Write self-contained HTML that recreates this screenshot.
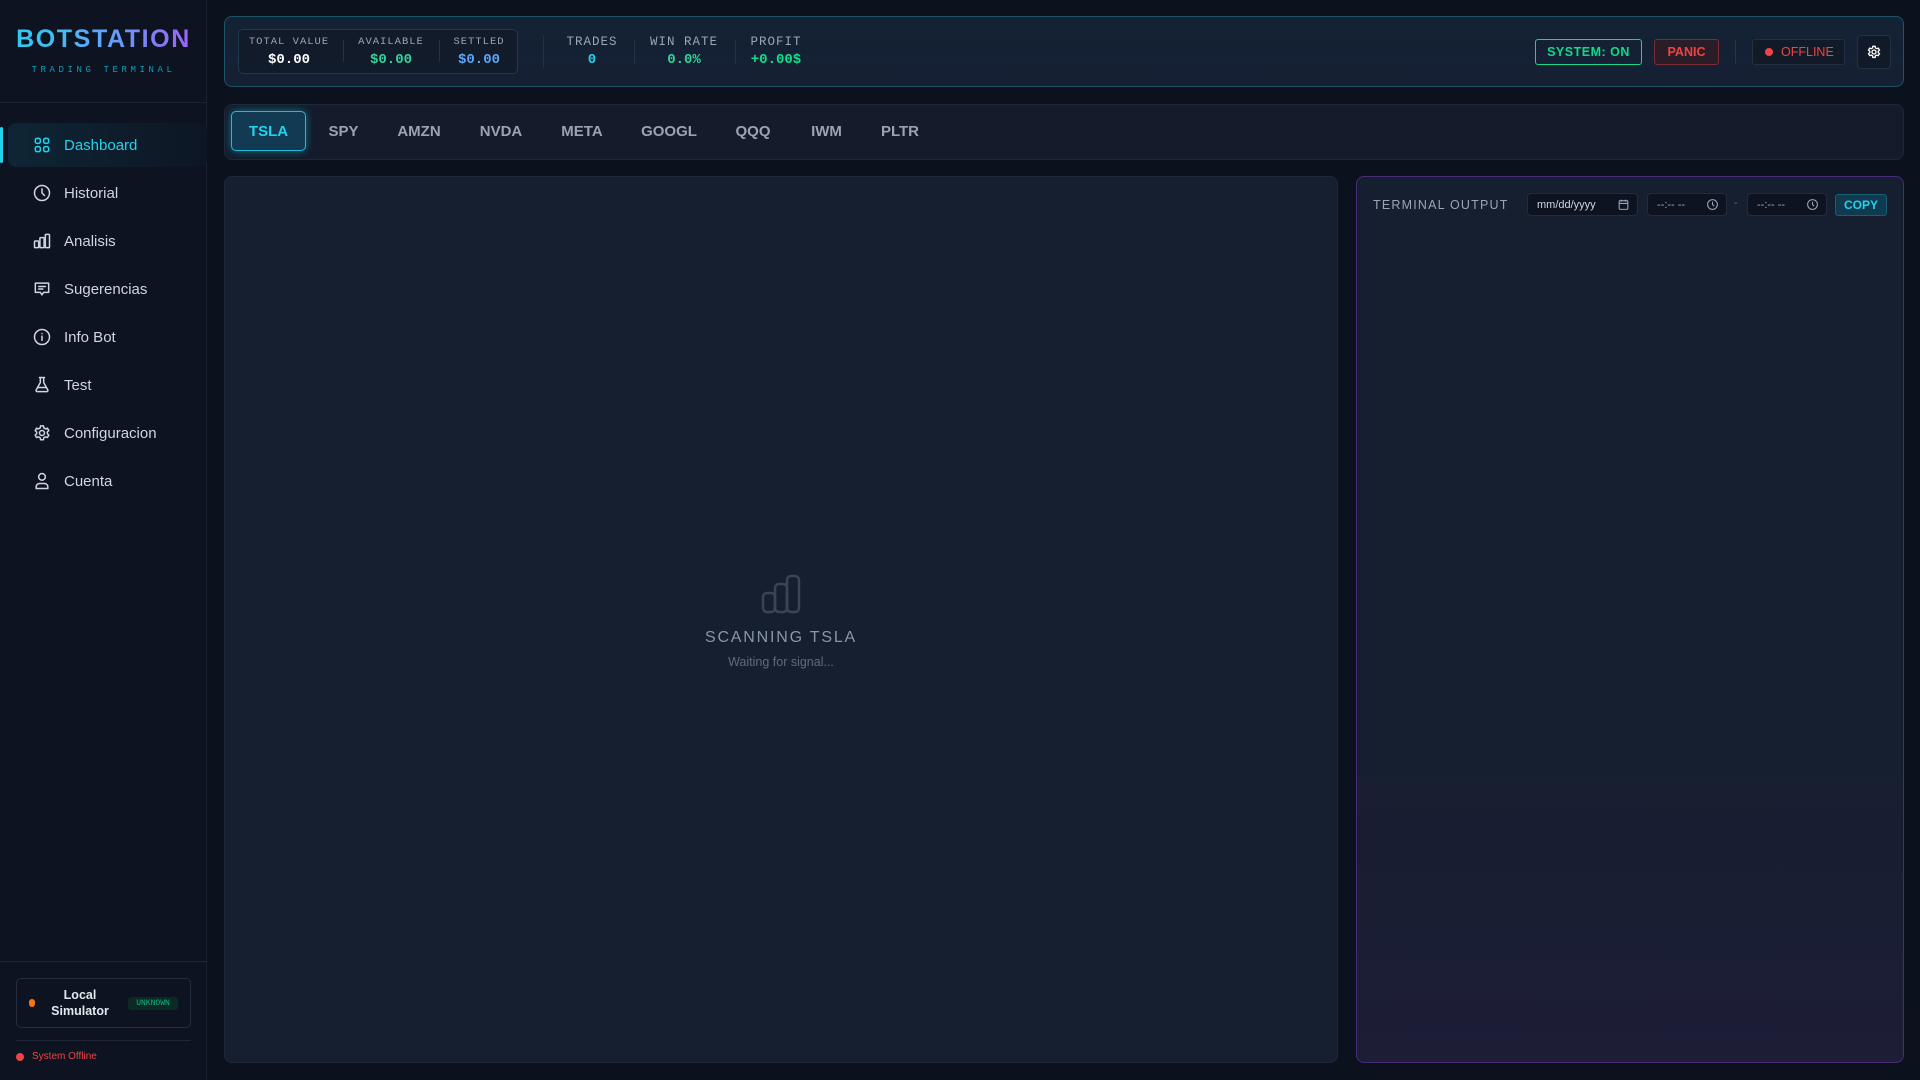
<!DOCTYPE html>
<html><head><meta charset="utf-8"><style>
*{box-sizing:border-box;margin:0;padding:0}
body{width:1920px;height:1080px;background:#0b111d;font-family:"Liberation Sans",sans-serif;position:relative;overflow:hidden;color:#cbd5e1}
.abs{position:absolute}
.side{left:0;top:0;width:207px;height:1080px;background:#0d1320;border-right:1px solid #1a2232}
.logo{left:0;top:25px;width:207px;text-align:center;font-size:25px;font-weight:bold;letter-spacing:1.6px;background:linear-gradient(90deg,#22d3ee,#60a5fa 50%,#a855f7);-webkit-background-clip:text;color:transparent}
.sub{left:0;top:65px;width:207px;text-align:center;font-family:"Liberation Mono",monospace;font-size:9px;letter-spacing:3.6px;color:#0e9fb8}
.nav{left:8px;width:199px;height:44px;display:flex;align-items:center;padding-left:24px;font-size:15px;color:#cfd6e0}
.nav svg{width:20px;height:20px;margin-right:12px;fill:none;stroke:#cfd6e0;stroke-width:1.8;stroke-linecap:round;stroke-linejoin:round}
.nav.act{background:linear-gradient(90deg,#0f2535,#0d1624);border-radius:8px;color:#22d3ee}
.nav.act svg{stroke:#22d3ee}
.card{border-radius:8px}
.mono{font-family:"Liberation Mono",monospace}
.lbl{font-size:11px;letter-spacing:1px;color:#9aa5b5;text-align:center}
.val{font-size:14px;font-weight:bold;text-align:center}
.tab{top:111px;height:40px;border-radius:5px;background:#141c2b;color:#9ca3af;font-size:15px;font-weight:bold;display:flex;align-items:center;justify-content:center}
.inp{top:193px;height:23px;border:1px solid #232c3b;background:#0d1320;border-radius:4px;font-size:11px;color:#cbd5e1;display:flex;align-items:center;padding-left:9px}
</style></head><body>
<div class="abs side"></div>
<div class="abs logo">BOTSTATION</div>
<div class="abs sub">TRADING TERMINAL</div>
<div class="abs" style="left:0;top:102px;width:207px;height:1px;background:#1a2232"></div>
<div class="abs" style="left:0;top:127px;width:3px;height:36px;background:#22d3ee;border-radius:2px"></div>

<div class="abs nav act" style="top:123px"><svg viewBox="0 0 24 24"><rect x="4" y="4" width="6" height="6" rx="2"/><rect x="14" y="4" width="6" height="6" rx="2"/><rect x="4" y="14" width="6" height="6" rx="2"/><rect x="14" y="14" width="6" height="6" rx="2"/></svg>Dashboard</div>
<div class="abs nav" style="top:171px"><svg viewBox="0 0 24 24"><circle cx="12" cy="12" r="9"/><path d="M12 7v5l3 3"/></svg>Historial</div>
<div class="abs nav" style="top:219px"><svg viewBox="0 0 24 24"><rect x="3" y="12" width="5" height="8" rx="1"/><rect x="9.5" y="8" width="5" height="12" rx="1"/><rect x="16" y="4" width="5" height="16" rx="1"/></svg>Analisis</div>
<div class="abs nav" style="top:267px"><svg viewBox="0 0 24 24"><path d="M4 5h16v11h-6l-2 3-2-3H4z"/><path d="M8 9h8M8 12h5"/></svg>Sugerencias</div>
<div class="abs nav" style="top:315px"><svg viewBox="0 0 24 24"><circle cx="12" cy="12" r="9"/><path d="M12 11v5M12 8h.01"/></svg>Info Bot</div>
<div class="abs nav" style="top:363px"><svg viewBox="0 0 24 24"><path d="M9 3h6M10 3v6l-5 9a1.5 1.5 0 0 0 1.3 2h11.4a1.5 1.5 0 0 0 1.3-2l-5-9V3M7 15h10"/></svg>Test</div>
<div class="abs nav" style="top:411px"><svg viewBox="0 0 24 24"><circle cx="12" cy="12" r="3"/><path d="M10.3 3.5h3.4l.5 2.4 2 1.1 2.3-.8 1.7 2.9-1.8 1.6v2.2l1.8 1.6-1.7 2.9-2.3-.8-2 1.1-.5 2.4h-3.4l-.5-2.4-2-1.1-2.3.8-1.7-2.9 1.8-1.6v-2.2L3.8 9.1l1.7-2.9 2.3.8 2-1.1z"/></svg>Configuracion</div>
<div class="abs nav" style="top:459px"><svg viewBox="0 0 24 24"><circle cx="12" cy="7" r="4"/><path d="M5 21v-2a4 4 0 0 1 4-4h6a4 4 0 0 1 4 4v2z"/></svg>Cuenta</div>

<div class="abs" style="left:0;top:961px;width:207px;height:1px;background:#1f2736"></div>
<div class="abs" style="left:16px;top:978px;width:175px;height:50px;border:1px solid #252e3e;border-radius:5px;background:#0d1320"></div>
<div class="abs" style="left:29px;top:999px;width:6px;height:8px;border-radius:3px;background:#f97316"></div>
<div class="abs" style="left:40px;top:987px;width:80px;text-align:center;font-size:12.5px;font-weight:bold;color:#e2e8f0;line-height:16px">Local<br>Simulator</div>
<div class="abs mono" style="left:128px;top:997px;width:50px;height:13px;background:#0b2a24;border-radius:3px;color:#10b981;font-size:8px;text-align:center;line-height:13px">UNKNOWN</div>
<div class="abs" style="left:16px;top:1040px;width:175px;height:1px;background:#1f2736"></div>
<div class="abs" style="left:16px;top:1053px;width:8px;height:8px;border-radius:50%;background:#ef4444"></div>
<div class="abs" style="left:32px;top:1051px;font-size:10px;color:#ef4444">System Offline</div>

<!-- top card -->
<div class="abs card" style="left:224px;top:16px;width:1680px;height:71px;background:linear-gradient(180deg,#132235,#162033);border:1px solid #1d5468"></div>
<div class="abs" style="left:238px;top:29px;width:280px;height:45px;border:1px solid #1f3a4c;border-radius:5px;background:#111b2a"></div>
<div class="abs mono lbl" style="left:238px;top:36px;width:102px;font-size:10.5px">TOTAL VALUE</div>
<div class="abs mono val" style="left:238px;top:52px;width:102px;color:#fff">$0.00</div>
<div class="abs" style="left:343px;top:40px;width:1px;height:22px;background:#253042"></div>
<div class="abs mono lbl" style="left:343px;top:36px;width:96px;font-size:10.5px">AVAILABLE</div>
<div class="abs mono val" style="left:343px;top:52px;width:96px;color:#34d399">$0.00</div>
<div class="abs" style="left:439px;top:40px;width:1px;height:22px;background:#253042"></div>
<div class="abs mono lbl" style="left:440px;top:36px;width:78px;font-size:10.5px">SETTLED</div>
<div class="abs mono val" style="left:440px;top:52px;width:78px;color:#60a5fa">$0.00</div>
<div class="abs" style="left:543px;top:35px;width:1px;height:33px;background:#253042"></div>
<div class="abs mono lbl" style="left:557px;top:35px;width:70px;font-size:12.5px">TRADES</div>
<div class="abs mono val" style="left:557px;top:52px;width:70px;color:#22d3ee">0</div>
<div class="abs" style="left:634px;top:40px;width:1px;height:24px;background:#253042"></div>
<div class="abs mono lbl" style="left:644px;top:35px;width:80px;font-size:12.5px">WIN RATE</div>
<div class="abs mono val" style="left:644px;top:52px;width:80px;color:#34d399">0.0%</div>
<div class="abs" style="left:735px;top:40px;width:1px;height:24px;background:#253042"></div>
<div class="abs mono lbl" style="left:741px;top:35px;width:70px;font-size:12.5px">PROFIT</div>
<div class="abs mono val" style="left:741px;top:52px;width:70px;color:#10e08a">+0.00$</div>

<div class="abs" style="left:1535px;top:39px;width:107px;height:26px;border:1.5px solid #10d98a;border-radius:3px;color:#10d98a;font-size:12.5px;font-weight:bold;text-align:center;line-height:24px;letter-spacing:.5px">SYSTEM: ON</div>
<div class="abs" style="left:1654px;top:39px;width:65px;height:26px;border:1px solid #7f2a33;background:#2a1d27;border-radius:3px;color:#ef4444;font-size:12.5px;font-weight:bold;text-align:center;line-height:25px">PANIC</div>
<div class="abs" style="left:1735px;top:40px;width:1px;height:24px;background:#2a3444"></div>
<div class="abs" style="left:1752px;top:39px;width:93px;height:26px;border:1px solid #262f3f;background:#121a28;border-radius:3px"></div>
<div class="abs" style="left:1765px;top:48px;width:8px;height:8px;border-radius:50%;background:#ef4444"></div>
<div class="abs" style="left:1781px;top:45px;font-size:12.5px;color:#ef4444">OFFLINE</div>
<div class="abs" style="left:1857px;top:35px;width:34px;height:34px;border:1px solid #262f3f;background:#111a28;border-radius:4px"></div>
<svg class="abs" style="left:1866px;top:44px" width="16" height="16" viewBox="0 0 24 24" fill="none" stroke="#fff" stroke-width="2"><circle cx="12" cy="12" r="3"/><path d="M10.3 3.5h3.4l.5 2.4 2 1.1 2.3-.8 1.7 2.9-1.8 1.6v2.2l1.8 1.6-1.7 2.9-2.3-.8-2 1.1-.5 2.4h-3.4l-.5-2.4-2-1.1-2.3.8-1.7-2.9 1.8-1.6v-2.2L3.8 9.1l1.7-2.9 2.3.8 2-1.1z"/></svg>

<!-- tabs -->
<div class="abs card" style="left:224px;top:104px;width:1680px;height:56px;background:#141c2b;border:1px solid #1f2838"></div>
<div class="abs tab" style="left:231px;width:75px;background:#123a52;border:1.5px solid #22b8d8;color:#22d3ee;box-shadow:0 0 8px #0e7490">TSLA</div>
<div class="abs tab" style="left:313px;width:61px">SPY</div>
<div class="abs tab" style="left:381px;width:76px">AMZN</div>
<div class="abs tab" style="left:463px;width:76px">NVDA</div>
<div class="abs tab" style="left:545px;width:74px">META</div>
<div class="abs tab" style="left:626px;width:86px">GOOGL</div>
<div class="abs tab" style="left:718px;width:70px">QQQ</div>
<div class="abs tab" style="left:795px;width:63px">IWM</div>
<div class="abs tab" style="left:864px;width:72px">PLTR</div>

<!-- chart panel -->
<div class="abs card" style="left:224px;top:176px;width:1114px;height:887px;background:#161f30;border:1px solid #1f2838"></div>
<svg class="abs" style="left:760px;top:573px" width="42" height="42" viewBox="0 0 42 42" fill="none" stroke="#3a4456" stroke-width="2.5"><rect x="3" y="20" width="12" height="19" rx="4"/><rect x="15" y="11" width="12" height="28" rx="4"/><rect x="27" y="3" width="12" height="36" rx="4"/></svg>
<div class="abs" style="left:224px;top:629px;width:1114px;text-align:center;font-size:16px;letter-spacing:1.8px;color:#8a95a6">SCANNING TSLA</div>
<div class="abs" style="left:224px;top:655px;width:1114px;text-align:center;font-size:12.5px;color:#5f6a7b">Waiting for signal...</div>

<!-- terminal -->
<div class="abs card" style="left:1356px;top:176px;width:548px;height:887px;background:linear-gradient(180deg,#161f30 65%,#1d1d36);border:1px solid #4c2a7a"></div>
<div class="abs" style="left:1373px;top:198px;font-size:12.5px;letter-spacing:1.2px;color:#9aa4b4">TERMINAL OUTPUT</div>
<div class="abs inp" style="left:1527px;width:111px">mm/dd/yyyy</div>
<svg class="abs" style="left:1617px;top:198px" width="13" height="13" viewBox="0 0 24 24" fill="none" stroke="#9aa4b4" stroke-width="2"><rect x="4" y="5" width="16" height="16" rx="2"/><path d="M4 10h16M8 3v4M16 3v4"/></svg>
<div class="abs inp" style="left:1647px;width:80px;color:#aab">--:-- --</div>
<svg class="abs" style="left:1706px;top:198px" width="13" height="13" viewBox="0 0 24 24" fill="none" stroke="#9aa4b4" stroke-width="2"><circle cx="12" cy="12" r="9"/><path d="M12 7v5l3 3"/></svg>
<div class="abs" style="left:1734px;top:197px;font-size:11px;color:#5f6a7b">-</div>
<div class="abs inp" style="left:1747px;width:80px;color:#aab">--:-- --</div>
<svg class="abs" style="left:1806px;top:198px" width="13" height="13" viewBox="0 0 24 24" fill="none" stroke="#9aa4b4" stroke-width="2"><circle cx="12" cy="12" r="9"/><path d="M12 7v5l3 3"/></svg>
<div class="abs" style="left:1835px;top:194px;width:52px;height:22px;background:#0f3a50;border:1px solid #155e75;border-radius:3px;color:#22d3ee;font-size:12px;font-weight:bold;text-align:center;line-height:20px">COPY</div>
</body></html>
